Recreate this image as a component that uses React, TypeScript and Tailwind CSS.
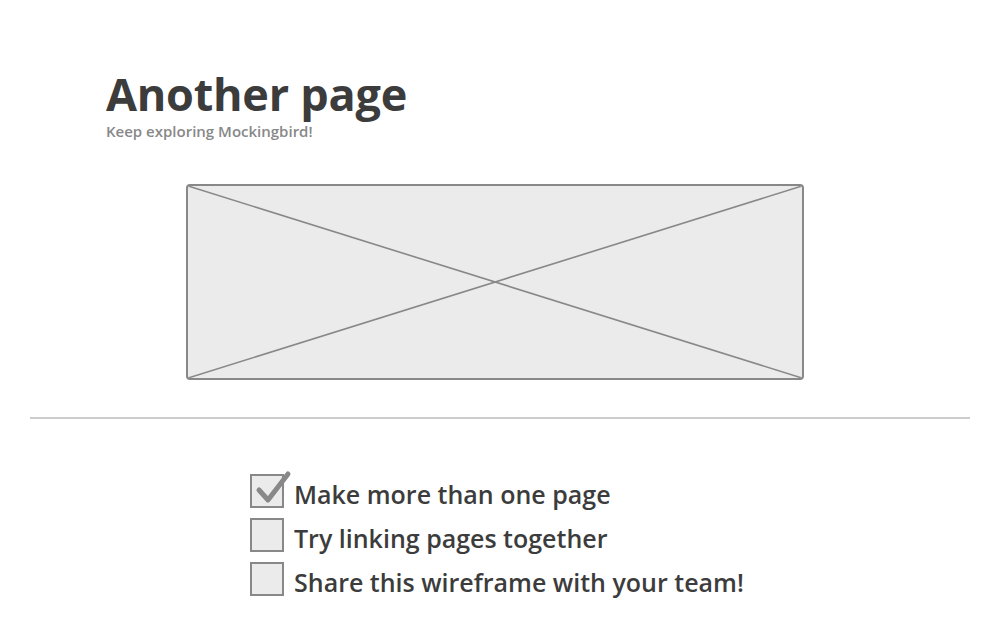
import React from "react";

const font = { fontFamily: '"Open Sans", "Noto Sans", sans-serif' };

function Box({ checked }: { checked?: boolean }) {
  return (
    <div className="relative w-[34px] h-[34px] shrink-0 border-2 border-[#888888] bg-[#ebebeb]">
      {checked && (
        <svg className="absolute left-[2px] top-[-8px]" width="38" height="40" viewBox="0 0 38 40">
          <path d="M5 22 L14 32 L34 6" fill="none" stroke="#888888" strokeWidth="5" strokeLinecap="round" strokeLinejoin="round" />
        </svg>
      )}
    </div>
  );
}

export default function App() {
  const items = [
    { t: "Make more than one page", c: true },
    { t: "Try linking pages together", c: false },
    { t: "Share this wireframe with your team!", c: false },
  ];
  return (
    <div className="w-[990px] h-[620px] bg-white flex flex-col" style={font}>
      <div className="pl-[106px] pt-[71px] flex flex-col">
        <h1 className="text-[45px] leading-[46px] font-bold text-[#3c3c3c] tracking-[-0.25px]">Another page</h1>
        <p className="text-[15px] leading-[18px] font-semibold text-[#888888] mt-[5px]">Keep exploring Mockingbird!</p>
      </div>
      <div className="pl-[186px] pt-[44px]">
        <div className="relative w-[618px] h-[196px] border-2 border-[#888888] rounded-[4px] bg-[#ebebeb] overflow-hidden">
          <svg className="absolute inset-0" width="614" height="192" viewBox="0 0 614 192" preserveAspectRatio="none">
            <line x1="0" y1="0" x2="614" y2="192" stroke="#888888" strokeWidth="1.6" />
            <line x1="0" y1="192" x2="614" y2="0" stroke="#888888" strokeWidth="1.6" />
          </svg>
        </div>
      </div>
      <div className="pl-[30px] pr-[20px] pt-[37px]">
        <div className="h-[2px] bg-[#cccccc]" />
      </div>
      <div className="pl-[250px] pt-[55px] flex flex-col gap-[10px]">
        {items.map((it) => (
          <div key={it.t} className="flex items-start gap-[10px] h-[34px]">
            <Box checked={it.c} />
            <span className="text-[25px] leading-[34px] font-semibold text-[#3c3c3c] mt-[3px] whitespace-nowrap">{it.t}</span>
          </div>
        ))}
      </div>
    </div>
  );
}
